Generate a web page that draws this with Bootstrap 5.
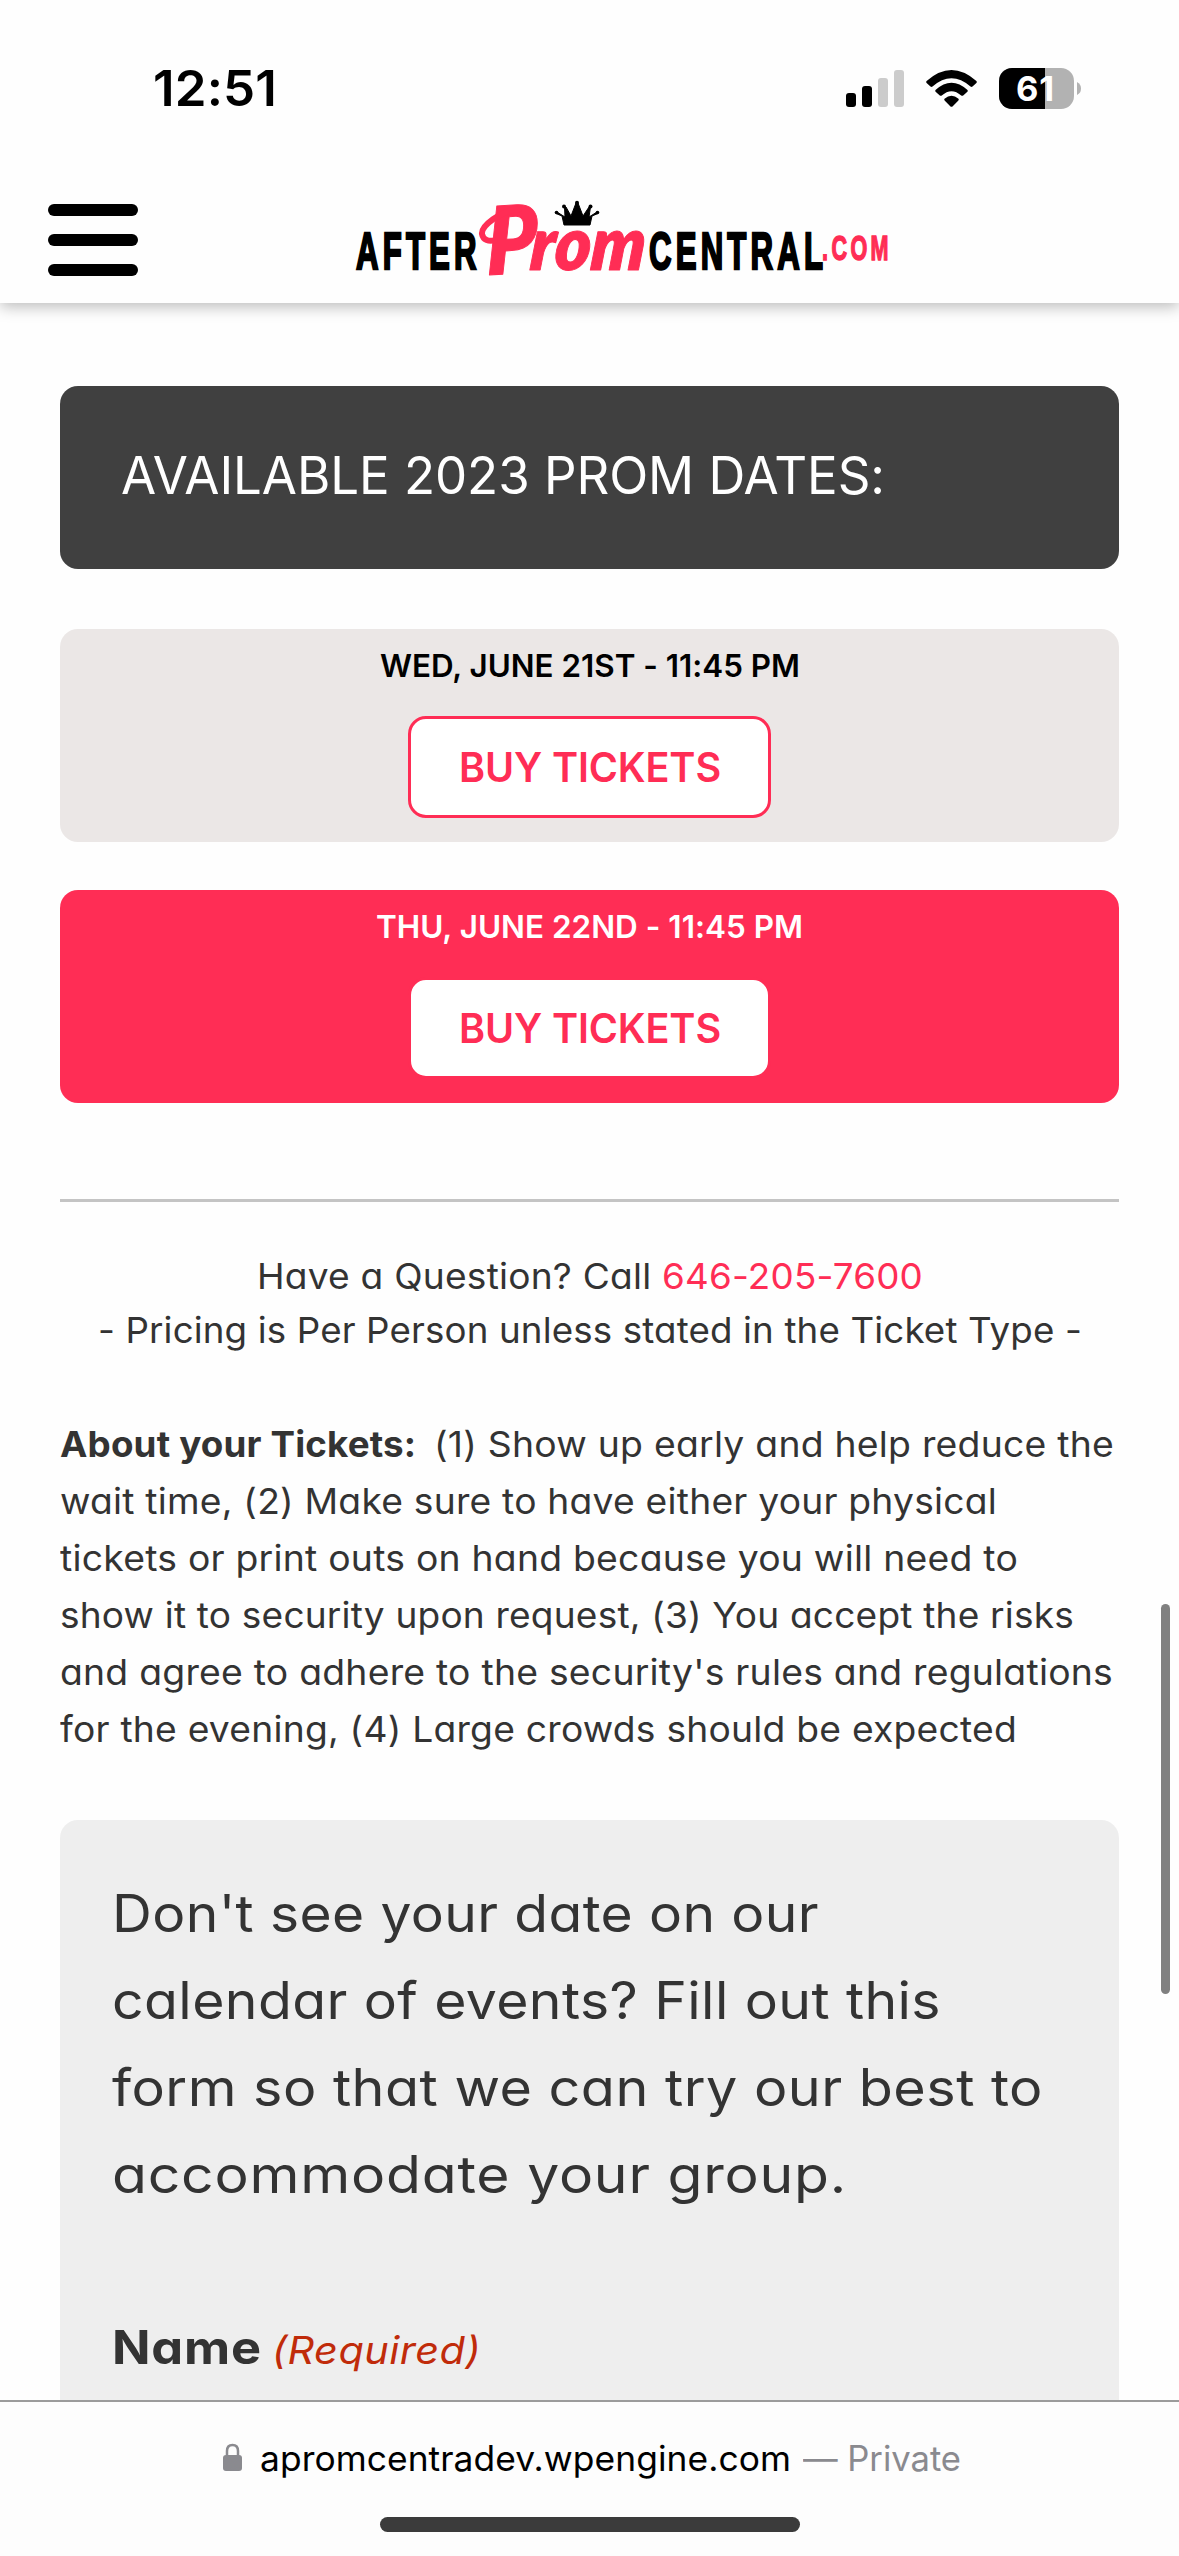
<!DOCTYPE html>
<html lang="en">
<head>
<meta charset="utf-8">
<meta name="viewport" content="width=device-width, initial-scale=1">
<title>After Prom Central</title>
<link href="https://cdn.jsdelivr.net/npm/bootstrap@5.3.0/dist/css/bootstrap.min.css" rel="stylesheet">
<style>
html,body{height:2556px;overflow:hidden}
body{font-family:Inter,"Open Sans",sans-serif;font-feature-settings:"cv11";color:#333;background:#fefefe;font-size:35.5px;line-height:57px}
.fit{display:inline-block;white-space:pre;transform-origin:0 50%;text-align:left;flex:none}
.statusbar{height:176px;padding:0 95px 0 153px}
.clock{font-size:50px;font-weight:600;color:#000;line-height:60px}
.sitebar{height:127px;padding-left:48px;background:#fefefe;box-shadow:0 4px 14px rgba(0,0,0,.26);clip-path:inset(0 0 -30px 0);z-index:2}
.burger{width:90px;height:72px}
.burger i{height:12px;border-radius:6px;background:#000}
.logo{margin-left:207px;overflow:visible}
main{padding:83px 60px 0}
.panel{border-radius:18px}
.dates-head{height:183px;background:#404040;color:#fff;padding:49px 0 0 61px;font-size:51.5px;line-height:80px}
.date-box{height:213px;margin-top:60px;padding-top:12px;background:#ebe7e6;color:#000}
.date-box.hot{margin-top:48px;background:#ff2d55;color:#fff}
.date-label{font-size:31.5px;font-weight:600;line-height:50px}
.btn-buy{width:363px;height:102px;border:3px solid #ff2d55;border-radius:18px;background:#fff;color:#ff2d55;font-size:40.5px;font-weight:600;line-height:98px;padding:0;margin-top:25px}
.rule{height:3px;background:#c4c4c4;margin-top:96px}
.question{margin-top:48px;line-height:54px}
.phone{color:#ff2d55}
.about{margin-top:58px}
.about>.fit,.ask>.fit{display:block}
.request{margin-top:62px;background:#eee;padding:50px 0 0 52px;height:800px}
.ask{font-size:52px;line-height:87px}
.field{margin-top:89px;line-height:80px;gap:10px}
.field-name{font-size:46.5px;font-weight:700}
.req{font-size:38px;font-style:italic;color:#c02b0a}
.urlbar{height:156px;border-top:2px solid #9b9b9b;background:#fdfdfd;padding-top:26px;z-index:3}
.urlrow{line-height:60px;font-size:35px;color:#000;font-feature-settings:normal;margin-left:222px}
.lock{margin-right:17px}
.muted-tag{color:#8a8a8f;margin-left:12px}
.home{width:420px;height:15px;border-radius:8px;background:#3b3b3b;margin:29px auto 0}
.thumb{right:9px;top:1604px;width:9px;height:390px;border-radius:5px;background:#808080;z-index:2}
</style>
<script src="https://cdn.jsdelivr.net/npm/bootstrap@5.3.0/dist/js/bootstrap.bundle.min.js"></script>
</head>
<body class="d-flex flex-column position-relative">
<div class="statusbar d-flex align-items-center flex-shrink-0">
  <span class="clock fit" data-w="124">12:51</span>
  <svg class="ms-auto" width="240" height="50" viewBox="844 62 240 50">
    <rect x="846" y="92" width="10" height="14" rx="3"/><rect x="862" y="85" width="10" height="21" rx="3"/>
    <rect x="878" y="77" width="10" height="29" rx="3" fill="#ccc"/><rect x="894" y="69" width="10" height="37" rx="3" fill="#ccc"/>
    <path d="M926.6 80Q951.500 58 976.400 80Q977.200 81 976.400 82L972.500 85.500Q971.500 86.300 970.500 85.500Q951.500 69 932.500 85.500Q931.500 86.300 930.500 85.500L926.600 82Q925.800 81 926.600 80Z"/>
    <path d="M935.500 89Q951.500 74.500 967.500 89Q968.200 90 967.400 90.800L963.200 94.500Q962.200 95.200 961.200 94.500Q951.500 86 941.800 94.500Q940.800 95.200 939.800 94.500L935.600 90.800Q934.800 90 935.500 89Z"/>
    <path d="M944.500 97.800Q951.500 91.500 958.500 97.800Q959.200 98.600 958.400 99.400L952.500 105.400Q951.500 106.300 950.500 105.400L944.600 99.400Q943.800 98.600 944.500 97.800Z"/>
    <clipPath id="cell"><rect x="999" y="67" width="75" height="41" rx="13"/></clipPath>
    <g clip-path="url(#cell)"><rect x="999" y="67" width="75" height="41" fill="#b2b2b2"/><rect x="999" y="67" width="46" height="41"/></g>
    <path d="M1077 81Q1081 83 1081 87.500T1077 94Z" fill="#b2b2b2"/>
    <text x="1016" y="100" font-size="34.500" font-weight="700" fill="#fff" textLength="38">61</text>
  </svg>
</div>
<header class="sitebar d-flex align-items-center flex-shrink-0 position-relative">
  <div class="burger d-flex flex-column justify-content-between"><i></i><i></i><i></i></div>
  <svg class="logo" width="560" height="100" viewBox="345 190 560 100">
    <g font-family="'Liberation Sans Narrow','Liberation Sans',sans-serif" font-weight="700">
      <g stroke="#000" stroke-width="2.400">
        <text transform="translate(356 268.500) scale(.6 1)" font-size="52" textLength="201">AFTER</text>
        <text transform="translate(649 268.500) scale(.6 1)" font-size="52" textLength="290">CENTRAL</text>
      </g>
      <text transform="translate(822 260) scale(.6 1)" font-size="36" fill="#ff2d55" stroke="#ff2d55" stroke-width="1.500" textLength="111">.COM</text>
    </g>
    <g font-family="Lato,sans-serif" font-weight="800" font-style="italic" fill="#ff2d55" stroke="#ff2d55" stroke-linejoin="round">
      <text transform="translate(487 275) rotate(-3) skewX(-3)" font-size="94" textLength="50" lengthAdjust="spacingAndGlyphs">P</text>
      <text transform="translate(529 269.500) skewX(-5)" font-size="74" textLength="115" lengthAdjust="spacingAndGlyphs">rom</text>
    </g>
    <path d="M519 209C500 211 481 226 482 234C483 240 489 242 495 240" fill="none" stroke="#ff2d55" stroke-width="6" stroke-linecap="round"/>
    <path d="M564 225L562 216L556 213.500L557 212L565 217L564.500 207L566 207L571 216L576 203H578L583 216L589 207H590.500L589 217L597 212L598 213.500L592 216L590 225Z" stroke="#000" stroke-width="1"/>
    <circle cx="577" cy="202.800" r="2"/><circle cx="564" cy="206.500" r="2"/><circle cx="590.500" cy="206.500" r="2"/><circle cx="556.500" cy="212.500" r="1.800"/><circle cx="597.500" cy="212.500" r="1.800"/>
  </svg>
</header>
<main class="flex-grow-1 overflow-hidden">
  <div class="panel dates-head"><span class="fit" data-w="764">AVAILABLE 2023 PROM DATES:</span></div>
  <div class="panel date-box text-center">
    <div class="date-label"><span class="fit" data-w="420">WED, JUNE 21ST - 11:45 PM</span></div>
    <a class="btn btn-buy"><span class="fit" data-w="262">BUY TICKETS</span></a>
  </div>
  <div class="panel date-box hot text-center">
    <div class="date-label"><span class="fit" data-w="427">THU, JUNE 22ND - 11:45 PM</span></div>
    <a class="btn btn-buy"><span class="fit" data-w="262">BUY TICKETS</span></a>
  </div>
  <div class="rule"></div>
  <div class="question text-center">
    <div><span class="fit" data-w="405">Have a Question? Call </span><span class="fit phone" data-w="261">646-205-7600</span></div>
    <div><span class="fit" data-w="984">- Pricing is Per Person unless stated in the Ticket Type -</span></div>
  </div>
  <div class="about">
    <div class="d-flex"><b class="fit" data-w="374">About your Tickets:  </b><span class="fit" data-w="680">(1) Show up early and help reduce the</span></div>
    <span class="fit" data-w="937">wait time, (2) Make sure to have either your physical</span>
    <span class="fit" data-w="958">tickets or print outs on hand because you will need to</span>
    <span class="fit" data-w="1014">show it to security upon request, (3) You accept the risks</span>
    <span class="fit" data-w="1053">and agree to adhere to the security's rules and regulations</span>
    <span class="fit" data-w="957">for the evening, (4) Large crowds should be expected</span>
  </div>
  <div class="panel request">
    <div class="ask">
      <span class="fit" data-w="707">Don't see your date on our</span>
      <span class="fit" data-w="829">calendar of events? Fill out this</span>
      <span class="fit" data-w="931">form so that we can try our best to</span>
      <span class="fit" data-w="735">accommodate your group.</span>
    </div>
    <div class="field d-flex align-items-baseline"><span class="field-name fit" data-w="150">Name</span><span class="req fit" data-w="209">(Required)</span></div>
  </div>
</main>
<footer class="urlbar flex-shrink-0">
  <div class="urlrow d-flex align-items-center">
    <svg width="21" height="30" viewBox="0 0 21 30" class="lock"><rect x="1" y="12" width="19" height="16" rx="3" fill="#8a8a8f"/><path d="M5 13V8Q5 2 10.500 2T16 8V13" fill="none" stroke="#8a8a8f" stroke-width="2.500"/></svg>
    <span class="fit" data-w="531">apromcentradev.wpengine.com</span><span class="fit muted-tag" data-w="158">— Private</span>
  </div>
  <div class="home"></div>
</footer>
<div class="thumb position-absolute"></div>
<script>
// Set each line to the measure given in data-w: a little tracking, the rest by glyph width.
document.querySelectorAll('.fit').forEach(function (el) {
  var target = +el.dataset.w;
  el.style.display = 'inline-block';
  var gap = target - el.getBoundingClientRect().width;
  el.style.letterSpacing = (gap * 0.2 / el.textContent.length) + 'px';
  var w = el.getBoundingClientRect().width;
  el.style.display = '';
  el.style.width = target + 'px';
  el.style.transform = 'scaleX(' + target / w + ')';
});
</script>
</body>
</html>
